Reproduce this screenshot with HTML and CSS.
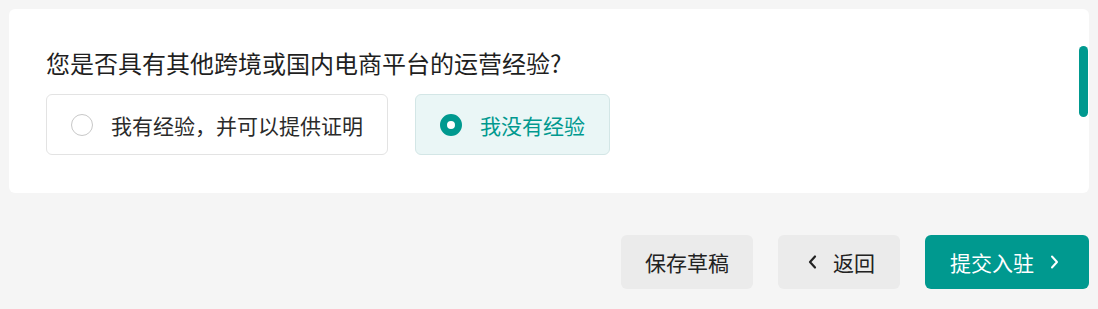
FILE: index.html
```html
<!DOCTYPE html>
<html lang="zh-CN">
<head>
    <meta charset="UTF-8">
    <meta name="viewport" content="width=device-width, initial-scale=1.0">
    <title>运营经验</title>
    <link rel="stylesheet" href="styles.css">
</head>
<body>
    <div class="page">
        <div class="card">
            <div class="question">您是否具有其他跨境或国内电商平台的运营经验?</div>
            <div class="options">
                <label class="option">
                    <span class="radio"></span>
                    <span class="option-text">我有经验，并可以提供证明</span>
                </label>
                <label class="option checked">
                    <span class="radio"></span>
                    <span class="option-text">我没有经验</span>
                </label>
            </div>
            <div class="scroll-thumb"></div>
        </div>

        <div class="actions">
            <button class="btn draft">保存草稿</button>
            <button class="btn">
                <svg class="chevron chevron-left" viewBox="0 0 20 20" width="20" height="20">
                    <path d="M12 4.5 L7 10 L12 15.5" fill="none" stroke="currentColor" stroke-width="2.2" stroke-linecap="round" stroke-linejoin="round"/>
                </svg>
                返回
            </button>
            <button class="btn primary">
                提交入驻
                <svg class="chevron chevron-right" viewBox="0 0 20 20" width="20" height="20">
                    <path d="M8 4.5 L13 10 L8 15.5" fill="none" stroke="currentColor" stroke-width="2" stroke-linecap="round" stroke-linejoin="round"/>
                </svg>
            </button>
        </div>
    </div>
</body>
</html>
```

FILE: styles.css
```css
body {
    margin: 0;
    background-color: #f5f5f5;
    font-family: "Noto Sans CJK SC", "Noto Sans", sans-serif;
    color: #222;
}

.page {
    padding: 9px 9px 0 9px;
}

.card {
    position: relative;
    background: white;
    border-radius: 6px;
    padding: 36px 36px 38px 37px;
}

.question {
    font-size: 24px;
    line-height: 36px;
    color: #1f1f1f;
    margin-bottom: 13px;
}

.options {
    display: flex;
    gap: 27px;
}

.option {
    display: flex;
    align-items: center;
    height: 59px;
    padding: 0 24px;
    border: 1px solid #e3e3e3;
    border-radius: 6px;
    background: white;
    cursor: pointer;
}

.radio {
    width: 20px;
    height: 20px;
    border: 1px solid #c8c8c8;
    border-radius: 50%;
    margin-right: 18px;
    box-sizing: content-box;
}

.option-text {
    font-size: 21px;
    line-height: 24px;
    color: #2b2b2b;
}

.option.checked {
    background: #eaf6f6;
    border-color: #d3e6e6;
}

.option.checked .radio {
    width: 8px;
    height: 8px;
    border: 7px solid #00998f;
    background: white;
}

.option.checked .option-text {
    color: #00998f;
}

.scroll-thumb {
    position: absolute;
    top: 37px;
    right: 1px;
    width: 9px;
    height: 71px;
    border-radius: 5px;
    background: #00998f;
}

.actions {
    display: flex;
    justify-content: flex-end;
    gap: 25px;
    margin-top: 42px;
}

.btn {
    display: flex;
    align-items: center;
    gap: 10px;
    height: 54px;
    padding: 0 25px;
    border: none;
    outline: none;
    border-radius: 6px;
    background: #ebebeb;
    color: #222;
    font-family: inherit;
    font-size: 21px;
    cursor: pointer;
}

.btn.draft {
    padding: 0 24px;
}

.btn.primary {
    background: #00998f;
    color: white;
}

.chevron {
    display: block;
}
```
